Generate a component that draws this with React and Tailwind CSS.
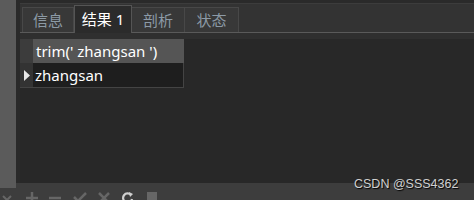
export default function App() {
  const font = { fontFamily: '"Noto Sans", "Open Sans", "Noto Sans CJK SC", sans-serif' };
  return (
    <div className="relative w-[474px] h-[200px] overflow-hidden bg-[#2a2a2a] flex flex-col" style={font}>
      <div className="flex h-[183px] shrink-0">
        <div className="w-[16px] h-[188px] bg-[#5b5b5b] shrink-0 relative z-10" />
        <div className="w-[4px] shrink-0 bg-[#2a2a2a]" />
        <div className="flex-1 flex flex-col">
          <div className="h-[3px] bg-[#2a2a2a]" />
          <div className="h-[1px] bg-[#3c3c3c]" />
          <div className="h-[28px] bg-[#333333] flex items-end pl-[2px] relative">
            <div className="w-[52px] h-[25px] border border-b-0 border-[#484848] bg-[#383838] flex items-center justify-center text-[15px] text-[#8c9aa6] leading-none">信息</div>
            <div className="w-[58px] h-[28px] -mb-[1px] border border-b-0 border-[#555] bg-[#2b2b2b] flex items-center justify-center text-[15px] text-white leading-none relative z-10">结果 1</div>
            <div className="w-[53px] h-[25px] border border-b-0 border-l-0 border-[#484848] bg-[#383838] flex items-center justify-center text-[15px] text-[#8c9aa6] leading-none">剖析</div>
            <div className="w-[54px] h-[25px] border border-b-0 border-l-0 border-[#484848] bg-[#383838] flex items-center justify-center text-[15px] text-[#8c9aa6] leading-none">状态</div>
          </div>
          <div className="h-[1px] bg-[#5a5a5a]" />
          <div className="h-[6px] bg-[#2f2f2f]" />
          <div className="flex-1 bg-[#282828]">
            <div className="flex h-[24px]">
              <div className="w-[13px] bg-[#3c3c3c]" />
              <div className="w-[151px] bg-[#555555] flex items-center pl-[3px] text-[15px] text-white leading-none">trim(' zhangsan ')</div>
            </div>
            <div className="flex h-[25px]">
              <div className="w-[13px] bg-[#333333] border-b border-[#444] flex items-center justify-center">
                <svg width="7" height="11" viewBox="0 0 7 11"><path d="M1 0 L7 5.5 L1 11 Z" fill="#e8e8e8" /></svg>
              </div>
              <div className="w-[151px] bg-[#1e1e1e] border-r border-b border-[#444] flex items-center pl-[2px] text-[15px] text-white leading-none">zhangsan</div>
            </div>
          </div>
        </div>
      </div>
      <div className="flex-1 bg-[#3d3d3d] flex items-end text-[#666] relative">
        <svg className="absolute left-[2px] top-[12px]" width="10" height="6" viewBox="0 0 10 6"><path d="M1 1 L5 5 L9 1" stroke="#666" strokeWidth="2" fill="none" /></svg>
        <svg className="absolute left-[26px] top-[9px]" width="12" height="12" viewBox="0 0 12 12"><path d="M6 0 V12 M0 6 H12" stroke="#666" strokeWidth="2.5" /></svg>
        <svg className="absolute left-[49px] top-[9px]" width="12" height="12" viewBox="0 0 12 12"><path d="M0 6 H12" stroke="#666" strokeWidth="2.5" /></svg>
        <svg className="absolute left-[73px] top-[9px]" width="14" height="12" viewBox="0 0 14 12"><path d="M1 5 L5 9 L13 1" stroke="#666" strokeWidth="2.5" fill="none" /></svg>
        <svg className="absolute left-[98px] top-[9px]" width="12" height="12" viewBox="0 0 12 12"><path d="M1 1 L11 11 M11 1 L1 11" stroke="#666" strokeWidth="2.5" /></svg>
        <svg className="absolute left-[122px] top-[9px]" width="12" height="12" viewBox="0 0 12 12"><path d="M9 3 A4.5 4.5 0 1 0 10 7" stroke="#cfcfcf" strokeWidth="2.2" fill="none" /><path d="M7 0 L11 2 L8 5 Z" fill="#cfcfcf" /></svg>
        <div className="absolute left-[147px] top-[9px] w-[10px] h-[10px] bg-[#666]" />
      </div>
      <div className="absolute left-[354px] top-[178px] text-[12.5px] text-[#d0d0d0] leading-none whitespace-nowrap" style={{ fontFamily: '"Liberation Sans", Arial, sans-serif', textShadow: '1px 1px 1px #000' }}>CSDN @SSS4362</div>
    </div>
  );
}
